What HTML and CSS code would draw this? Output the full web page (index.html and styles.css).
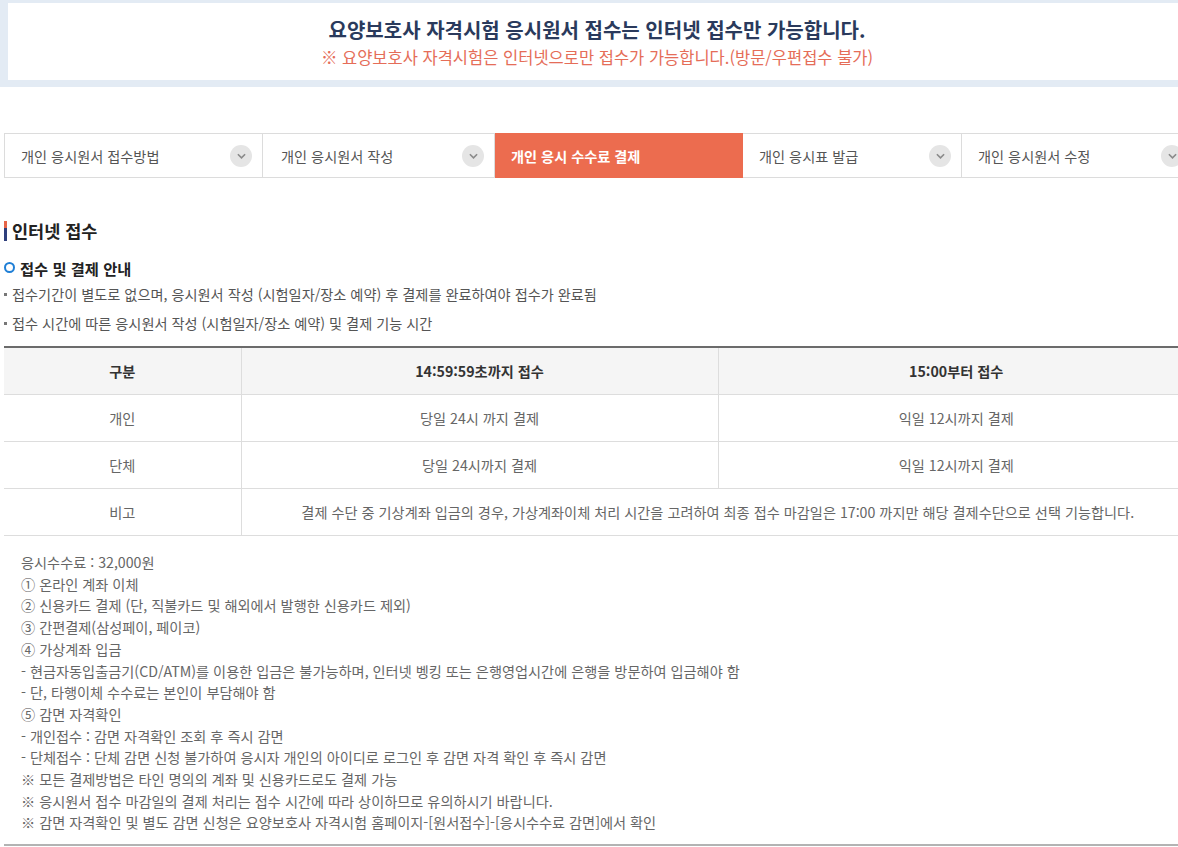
FILE: index.html
```html
<!DOCTYPE html>
<html lang="ko">

<head>
    <meta charset="UTF-8">
    <meta name="viewport" content="width=device-width, initial-scale=1.0">
    <title>요양보호사 자격시험 응시원서 접수</title>
    <link rel="stylesheet" href="styles.css">
</head>

<body>
    <div class="page">
        <div class="notice-box">
            <p class="notice-title">요양보호사 자격시험 응시원서 접수는 인터넷 접수만 가능합니다.</p>
            <p class="notice-sub">※ 요양보호사 자격시험은 인터넷으로만 접수가 가능합니다.(방문/우편접수 불가)</p>
        </div>

        <ul class="tabs">
            <li class="tab tab-1"><span>개인 응시원서 접수방법</span><i class="chev"><svg viewBox="0 0 10 6"><path d="M1 1l4 4 4-4" /></svg></i></li>
            <li class="tab tab-2"><span>개인 응시원서 작성</span><i class="chev"><svg viewBox="0 0 10 6"><path d="M1 1l4 4 4-4" /></svg></i></li>
            <li class="tab tab-3 active"><span>개인 응시 수수료 결제</span></li>
            <li class="tab tab-4"><span>개인 응시표 발급</span><i class="chev"><svg viewBox="0 0 10 6"><path d="M1 1l4 4 4-4" /></svg></i></li>
            <li class="tab tab-5"><span>개인 응시원서 수정</span><i class="chev"><svg viewBox="0 0 10 6"><path d="M1 1l4 4 4-4" /></svg></i></li>
        </ul>

        <h3 class="sec-title">인터넷 접수</h3>
        <h4 class="sub-title">접수 및 결제 안내</h4>
        <ul class="dot-list">
            <li>접수기간이 별도로 없으며, 응시원서 작성 (시험일자/장소 예약) 후 결제를 완료하여야 접수가 완료됨</li>
            <li>접수 시간에 따른 응시원서 작성 (시험일자/장소 예약) 및 결제 기능 시간</li>
        </ul>

        <table class="pay-table">
            <colgroup>
                <col class="c1">
                <col class="c2">
                <col class="c3">
            </colgroup>
            <thead>
                <tr>
                    <th>구분</th>
                    <th>14:59:59초까지 접수</th>
                    <th>15:00부터 접수</th>
                </tr>
            </thead>
            <tbody>
                <tr>
                    <td>개인</td>
                    <td>당일 24시 까지 결제</td>
                    <td>익일 12시까지 결제</td>
                </tr>
                <tr>
                    <td>단체</td>
                    <td>당일 24시까지 결제</td>
                    <td>익일 12시까지 결제</td>
                </tr>
                <tr>
                    <td>비고</td>
                    <td colspan="2">결제 수단 중 기상계좌 입금의 경우, 가상계좌이체 처리 시간을 고려하여 최종 접수 마감일은 17:00 까지만 해당 결제수단으로 선택 기능합니다.</td>
                </tr>
            </tbody>
        </table>

        <div class="fee-info">
            <p>응시수수료 : 32,000원</p>
            <p>① 온라인 계좌 이체</p>
            <p>② 신용카드 결제 (단, 직불카드 및 해외에서 발행한 신용카드 제외)</p>
            <p>③ 간편결제(삼성페이, 페이코)</p>
            <p>④ 가상계좌 입금</p>
            <p>- 현금자동입출금기(CD/ATM)를 이용한 입금은 불가능하며, 인터넷 벵킹 또는 은행영업시간에 은행을 방문하여 입금해야 함</p>
            <p>- 단, 타행이체 수수료는 본인이 부담해야 함</p>
            <p>⑤ 감면 자격확인</p>
            <p>- 개인접수 : 감면 자격확인 조회 후 즉시 감면</p>
            <p>- 단체접수 : 단체 감면 신청 불가하여 응시자 개인의 아이디로 로그인 후 감면 자격 확인 후 즉시 감면</p>
            <p>※ 모든 결제방법은 타인 명의의 계좌 및 신용카드로도 결제 가능</p>
            <p>※ 응시원서 접수 마감일의 결제 처리는 접수 시간에 따라 상이하므로 유의하시기 바랍니다.</p>
            <p>※ 감면 자격확인 및 별도 감면 신청은 요양보호사 자격시험 홈페이지-[원서접수]-[응시수수료 감면]에서 확인</p>
        </div>
    </div>
</body>

</html>
```

FILE: styles.css
```css
body {
    margin: 0;
    font-family: 'Noto Sans CJK KR', 'Noto Sans', sans-serif;
    color: #555;
    background: #fff;
    overflow-x: hidden;
}

.page {
    width: 1194px;
}

p {
    margin: 0;
}

/* 상단 안내 박스 */
.notice-box {
    height: 77px;
    border: 8px solid #e3ebf4;
    border-top-width: 3px;
    border-bottom-width: 7px;
    text-align: center;
}

.notice-title {
    padding-top: 13px;
    font-size: 20px;
    font-weight: bold;
    color: #2a3a5c;
    line-height: 28px;
}

.notice-sub {
    margin-top: 1px;
    font-size: 16.5px;
    color: #e56d58;
    line-height: 24px;
}

/* 탭 */
.tabs {
    display: flex;
    list-style: none;
    margin: 46px 0 0 4px;
    padding: 0;
    height: 45px;
}

.tab {
    display: flex;
    align-items: center;
    justify-content: space-between;
    box-sizing: border-box;
    border-top: 1px solid #dcdcdc;
    border-bottom: 1px solid #dcdcdc;
    border-right: 1px solid #dcdcdc;
    padding: 0 10px 0 16px;
    font-size: 14.2px;
    color: #555;
}

.tab-1 {
    width: 259px;
    border-left: 1px solid #dcdcdc;
}

.tab-2 {
    width: 232px;
    padding-left: 18px;
}

.tab-3 {
    width: 248px;
}

.tab-4 {
    width: 219px;
}

.tab-5 {
    width: 232px;
}

.tab.active {
    background: #ec6c4f;
    border-color: #ec6c4f;
    color: #fff;
    font-weight: bold;
}

.chev {
    width: 22px;
    height: 22px;
    border-radius: 50%;
    background: #e5e5e5;
    display: flex;
    align-items: center;
    justify-content: center;
}

.chev svg {
    width: 9px;
    height: 6px;
    fill: none;
    stroke: #8a8a8a;
    stroke-width: 1.8;
}

/* 제목 */
.sec-title {
    margin: 43px 0 0 4px;
    padding-left: 5px;
    font-size: 17.5px;
    line-height: 20px;
    color: #222;
    border-left: 3px solid #2f3f7c;
    border-image: linear-gradient(#e66549 0 35%, #2f3f7c 35%) 1;
}

.sub-title {
    position: relative;
    margin: 17px 0 0 4px;
    padding-left: 16px;
    font-size: 15.3px;
    line-height: 20px;
    color: #222;
}

.sub-title::before {
    content: "";
    position: absolute;
    left: 0;
    top: 4px;
    width: 7px;
    height: 7px;
    border: 2.5px solid #1f7fd6;
    border-radius: 50%;
}

.dot-list {
    list-style: none;
    margin: 2px 0 0 4px;
    padding: 0;
}

.dot-list li {
    position: relative;
    padding-left: 8px;
    font-size: 14.2px;
    line-height: 29px;
    color: #555;
}

.dot-list li::before {
    content: "";
    position: absolute;
    left: 0;
    top: 13px;
    width: 3px;
    height: 3px;
    background: #777;
}

/* 표 */
.pay-table {
    margin: 8px 0 0 4px;
    width: 1190px;
    border-collapse: collapse;
    border-top: 2px solid #6b6b6b;
    font-size: 14.2px;
}

.pay-table .c1 {
    width: 237px;
}

.pay-table .c2 {
    width: 477px;
}

.pay-table th,
.pay-table td {
    height: 46px;
    padding: 0;
    text-align: center;
    border-bottom: 1px solid #dddddd;
    border-left: 1px solid #dddddd;
}

.pay-table th:first-child,
.pay-table td:first-child {
    border-left: none;
}

.pay-table th {
    background: #f5f5f5;
    color: #333;
    font-weight: bold;
}

.pay-table td {
    color: #666;
}

/* 수수료 안내 */
.fee-info {
    margin: 16px 0 0 4px;
    padding: 0 0 10px 17px;
    border-bottom: 2px solid #b3b3b3;
    font-size: 14.2px;
    line-height: 21.7px;
    color: #666;
}
```
